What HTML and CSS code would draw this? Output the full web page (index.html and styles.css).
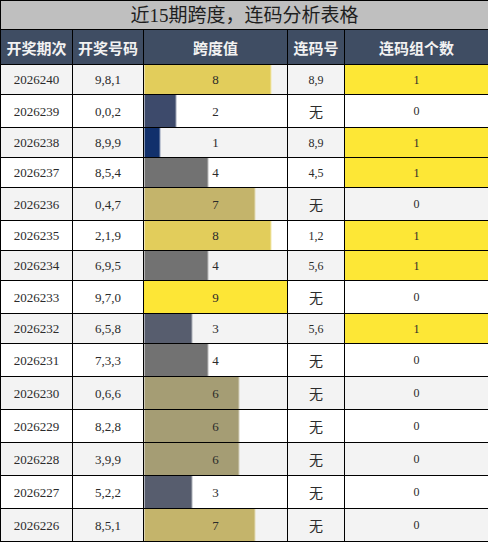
FILE: index.html
```html
<!DOCTYPE html>
<html lang="zh">
<head>
<meta charset="utf-8">
<title>近15期跨度，连码分析表格</title>
<link rel="stylesheet" href="styles.css">
</head>
<body>
<table class="grid">
  <colgroup>
    <col class="c1"><col class="c2"><col class="c3"><col class="c4"><col class="c5">
  </colgroup>
  <thead>
    <tr><th class="title" colspan="5">近15期跨度，连码分析表格</th></tr>
    <tr class="head">
      <th>开奖期次</th><th>开奖号码</th><th>跨度值</th><th>连码号</th><th>连码组个数</th>
    </tr>
  </thead>
  <tbody>
    <tr class="alt"><td>2026240</td><td>9,8,1</td><td class="span v8" style="--w:88.89%">8</td><td class="pair">8,9</td><td class="cnt hit">1</td></tr>
    <tr class="tall"><td>2026239</td><td>0,0,2</td><td class="span v2" style="--w:22.22%">2</td><td class="pair"><span class="none">无</span></td><td class="cnt">0</td></tr>
    <tr class="alt"><td>2026238</td><td>8,9,9</td><td class="span v1" style="--w:11.11%">1</td><td class="pair">8,9</td><td class="cnt hit">1</td></tr>
    <tr><td>2026237</td><td>8,5,4</td><td class="span v4" style="--w:44.44%">4</td><td class="pair">4,5</td><td class="cnt hit">1</td></tr>
    <tr class="alt tall"><td>2026236</td><td>0,4,7</td><td class="span v7" style="--w:77.78%">7</td><td class="pair"><span class="none">无</span></td><td class="cnt">0</td></tr>
    <tr><td>2026235</td><td>2,1,9</td><td class="span v8" style="--w:88.89%">8</td><td class="pair">1,2</td><td class="cnt hit">1</td></tr>
    <tr class="alt"><td>2026234</td><td>6,9,5</td><td class="span v4" style="--w:44.44%">4</td><td class="pair">5,6</td><td class="cnt hit">1</td></tr>
    <tr class="tall"><td>2026233</td><td>9,7,0</td><td class="span v9" style="--w:100%">9</td><td class="pair"><span class="none">无</span></td><td class="cnt">0</td></tr>
    <tr class="alt"><td>2026232</td><td>6,5,8</td><td class="span v3" style="--w:33.33%">3</td><td class="pair">5,6</td><td class="cnt hit">1</td></tr>
    <tr class="tall"><td>2026231</td><td>7,3,3</td><td class="span v4" style="--w:44.44%">4</td><td class="pair"><span class="none">无</span></td><td class="cnt">0</td></tr>
    <tr class="alt tall"><td>2026230</td><td>0,6,6</td><td class="span v6" style="--w:66.67%">6</td><td class="pair"><span class="none">无</span></td><td class="cnt">0</td></tr>
    <tr class="tall"><td>2026229</td><td>8,2,8</td><td class="span v6" style="--w:66.67%">6</td><td class="pair"><span class="none">无</span></td><td class="cnt">0</td></tr>
    <tr class="alt tall"><td>2026228</td><td>3,9,9</td><td class="span v6" style="--w:66.67%">6</td><td class="pair"><span class="none">无</span></td><td class="cnt">0</td></tr>
    <tr class="tall"><td>2026227</td><td>5,2,2</td><td class="span v3" style="--w:33.33%">3</td><td class="pair"><span class="none">无</span></td><td class="cnt">0</td></tr>
    <tr class="alt tall"><td>2026226</td><td>8,5,1</td><td class="span v7" style="--w:77.78%">7</td><td class="pair"><span class="none">无</span></td><td class="cnt">0</td></tr>
  </tbody>
</table>
</body>
</html>
```
FILE: styles.css
```css
html, body {
  margin: 0;
  padding: 0;
  background: #ffffff;
}

.grid {
  width: 488px;
  table-layout: fixed;
  border-collapse: collapse;
  font-family: "Liberation Serif", "Noto Sans CJK SC", serif;
  color: #2b2b2b;
}

.c1 { width: 72px; }
.c2 { width: 71px; }
.c3 { width: 144px; }
.c4 { width: 57px; }
.c5 { width: 144px; }

.grid th,
.grid td {
  border: 1px solid #000;
  padding: 0;
  text-align: center;
  vertical-align: middle;
  line-height: 1;
}

.title {
  height: 28px;
  background: #bfbfbf;
  font-family: "Liberation Serif", "Noto Sans CJK SC", sans-serif;
  font-size: 19px;
  font-weight: normal;
  color: #1e1e1e;
}

.head th {
  height: 34px;
  background: #3f4d63;
  color: #f2f2f2;
  font-family: "Noto Sans CJK SC", sans-serif;
  font-size: 15px;
  font-weight: bold;
}

.grid td {
  height: 29px;
  font-size: 13px;
  background-color: #ffffff;
}

.grid tr.tall td {
  height: 32px;
}

.grid tr.alt td {
  background-color: #f3f3f3;
}

.grid td.span {
  font-size: 13px;
  background-image: linear-gradient(to right,
    var(--c) calc(var(--w) - 1px),
    var(--l) calc(var(--w) - 1px),
    var(--l) var(--w),
    transparent var(--w));
}

.v1 { --c: #11306c; --l: #8f9bb5; }
.v2 { --c: #3d4a6b; --l: #9ea5b5; }
.v3 { --c: #575d6e; --l: #abaeb6; }
.v4 { --c: #727272; --l: #b9b9b9; }
.v6 { --c: #a59d74; --l: #d2ceba; }
.v7 { --c: #c4b46b; --l: #e2dab5; }
.v8 { --c: #e2cd5b; --l: #f0e6ad; }
.v9 { --c: #fde636; --l: #fde636; }

.grid td.pair {
  font-size: 12px;
}

.none {
  font-family: "Noto Sans CJK SC", sans-serif;
  font-size: 14px;
}

.grid td.cnt {
  font-size: 12px;
}

.grid td.hit,
.grid tr.alt td.hit {
  background-color: #fde736;
}
```
